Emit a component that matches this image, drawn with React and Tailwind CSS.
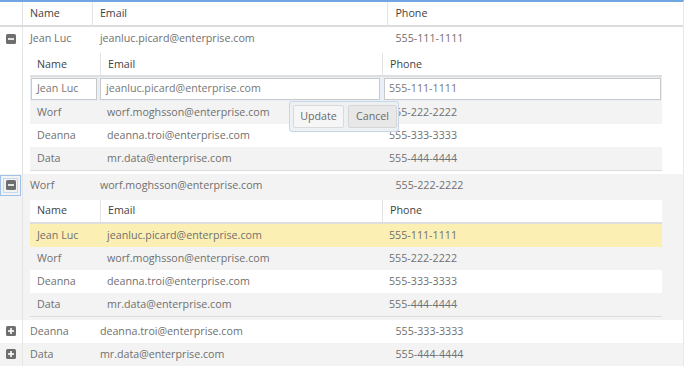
import React from "react";

const crew = [
  { name: "Jean Luc", email: "jeanluc.picard@enterprise.com", phone: "555-111-1111" },
  { name: "Worf", email: "worf.moghsson@enterprise.com", phone: "555-222-2222" },
  { name: "Deanna", email: "deanna.troi@enterprise.com", phone: "555-333-3333" },
  { name: "Data", email: "mr.data@enterprise.com", phone: "555-444-4444" },
];

const ToggleIcon = ({ open }) => (
  <svg width="10" height="10" viewBox="0 0 10 10">
    <rect x="0" y="0" width="10" height="10" rx="1.5" fill="#6e6e6e" />
    <rect x="2" y="4.2" width="6" height="1.6" fill="#fff" />
    {!open && <rect x="4.2" y="2" width="1.6" height="6" fill="#fff" />}
  </svg>
);

const NestedGrid = ({ mode }) => (
  <div className="w-[632px] bg-white border-b border-[#dcdcdc]">
    {/* encabezado */}
    <div className="flex h-[24px] border-b-2 border-[#dedede] text-[#3f3f3f]">
      <div className="w-[70px] pl-[7px] flex items-center">Name</div>
      <div className="w-[282px] pl-[7px] flex items-center border-l border-[#e3e3e3]">Email</div>
      <div className="w-[280px] pl-[7px] flex items-center border-l border-[#e3e3e3]">Phone</div>
    </div>
    {crew.map((p, i) => {
      if (mode === "edit" && i === 0) {
        return (
          <div key={p.name} className="flex h-[23.5px] items-center bg-[#e9eff6] text-[#777]">
            <div className="w-[70px] h-full pl-px py-px pr-[3px]">
              <div className="h-full border border-[#c9c9c9] bg-white pl-[5px] flex items-center">{p.name}</div>
            </div>
            <div className="w-[282px] h-full py-px pr-[2px]">
              <div className="h-full border border-[#c9c9c9] bg-white pl-[5px] flex items-center">{p.email}</div>
            </div>
            <div className="w-[280px] h-full py-px pl-[2px] pr-px">
              <div className="h-full border border-[#c9c9c9] bg-white pl-[4px] flex items-center">{p.phone}</div>
            </div>
          </div>
        );
      }
      const bg =
        mode === "select" && i === 0
          ? "bg-[#fcefb3]"
          : i % 2 === 1
          ? "bg-[#f3f3f3]"
          : "bg-white";
      return (
        <div key={p.name} className={`flex h-[23px] items-center text-[#707070] ${bg}`}>
          <div className="w-[70px] pl-[7px]">{p.name}</div>
          <div className="w-[282px] pl-[7px]">{p.email}</div>
          <div className="w-[280px] pl-[7px]">{p.phone}</div>
        </div>
      );
    })}
  </div>
);

const MainRow = ({ p, alt, open, focused }) => (
  <div className={`flex h-[23px] items-center text-[#707070] ${alt ? "bg-[#f3f3f3]" : "bg-white"}`}>
    <div className="w-[23px] h-full flex items-center justify-center border-r border-[#e6e6e6]">
      {focused ? (
        <div className="w-[21px] h-[21px] border border-[#9fc1e8] flex items-center justify-center">
          <div className="w-[15px] h-[15px] border border-[#c4d8ef] flex items-center justify-center">
            <ToggleIcon open={open} />
          </div>
        </div>
      ) : (
        <ToggleIcon open={open} />
      )}
    </div>
    <div className="w-[70px] pl-[7px]">{p.name}</div>
    <div className="w-[296px] pl-[7px]">{p.email}</div>
    <div className="w-[295px] pl-[7px]">{p.phone}</div>
  </div>
);

const DetailRow = ({ alt, children }) => (
  <div className={`flex ${alt ? "bg-[#f3f3f3]" : "bg-white"}`}>
    <div className="w-[23px] border-r border-[#e3e3e3]" />
    <div className="flex-1 pl-[7px] pt-[3px] pb-[3px]">{children}</div>
  </div>
);

export default function App() {
  return (
    <div
      className="relative w-[688px] h-[367px] overflow-hidden bg-white text-[10.7px] leading-none"
      style={{ fontFamily: '"Open Sans", "Liberation Sans", sans-serif' }}
    >
      <div className="w-[684px] border-t-2 border-[#6fa6e2] border-r border-r-[#e8e8e8]">
        {/* cabecera principal */}
        <div className="flex h-[25px] border-b-2 border-[#dcdcdc] text-[#3f3f3f]">
          <div className="w-[23px] border-r border-[#e3e3e3]" />
          <div className="w-[70px] pl-[7px] flex items-center border-r border-[#e3e3e3]">Name</div>
          <div className="w-[296px] pl-[7px] flex items-center border-r border-[#e3e3e3]">Email</div>
          <div className="w-[295px] pl-[7px] flex items-center">Phone</div>
        </div>

        <MainRow p={crew[0]} open />
        <DetailRow>
          <NestedGrid mode="edit" />
        </DetailRow>

        <MainRow p={crew[1]} alt open focused />
        <DetailRow alt>
          <NestedGrid mode="select" />
        </DetailRow>

        <MainRow p={crew[2]} />
        <MainRow p={crew[3]} alt />
      </div>

      {/* popup de edición */}
      <div className="absolute left-[289px] top-[101px] w-[110px] h-[31px] bg-[#eef1f4] border border-[#c8d6e5] rounded-[3px] flex items-center gap-[4px] pl-[3px] text-[#6a6a6a]">
        <button className="w-[51px] h-[23px] bg-[#f6f6f6] border border-[#dadada] rounded-[2px]">Update</button>
        <button className="w-[49px] h-[23px] bg-[#e8e8e8] border border-[#d6d6d6] rounded-[2px]">Cancel</button>
      </div>
    </div>
  );
}
